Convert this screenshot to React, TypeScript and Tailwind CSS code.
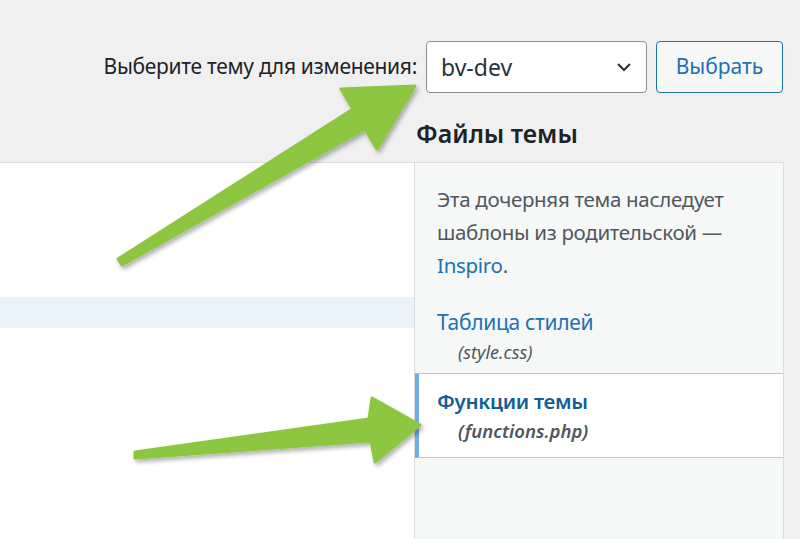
export default function App() {
  return (
    <div className="relative w-[800px] h-[539px] overflow-hidden bg-[#f0f0f1] text-[#3c434a]" style={{ fontFamily: '"Noto Sans", "Open Sans", sans-serif' }}>
      <div className="flex justify-end items-center gap-[9px] pt-[41px] pr-[17px]">
        <span className="text-[21px] tracking-[-0.3px] text-[#1d2327]">Выберите тему для изменения:</span>
        <div className="w-[221px] h-[52px] bg-white border border-[#8c8f94] rounded-[4px] flex items-center justify-between pl-[14px] pr-[12px]">
          <span className="text-[23px] text-[#2c3338]">bv-dev</span>
          <svg width="20" height="20" viewBox="0 0 20 20"><path d="M4 7l6 6 6-6" fill="none" stroke="#2c3338" strokeWidth="2.2" /></svg>
        </div>
        <div className="w-[127px] h-[52px] border border-[#2271b1] rounded-[4px] bg-[#f6f7f7] flex items-center justify-center text-[21px] text-[#2271b1]">Выбрать</div>
      </div>
      <div className="pl-[416px] mt-[22px] h-[47px] text-[25px] font-semibold text-[#1d2327]">Файлы темы</div>
      <div className="flex h-[400px]">
        <div className="w-[414px] bg-white border-t border-[#dcdcde] pt-[134px]">
          <div className="h-[31px] bg-[#eaf2fa]" />
        </div>
        <div className="w-[370px] bg-[#f6f7f7] border border-[#dcdcde] border-b-0">
          <div className="pl-[22px] pr-[8px] pt-[20px] text-[20.5px] tracking-[-0.3px] leading-[33px] text-[#50575e]">
            Эта дочерняя тема наследует шаблоны из родительской — <span className="text-[#2271b1]">Inspiro</span>.
          </div>
          <div className="mt-[25px] pl-[22px] text-[21px] tracking-[-0.3px] text-[#2271b1] leading-[30px]">Таблица стилей</div>
          <div className="pl-[43px] text-[18px] italic text-[#50575e] leading-[30px]">(style.css)</div>
          <div className="mt-[6px] h-[85px] bg-white border-y border-[#c3c4c7] border-l-[4px] border-l-[#72aee6] pl-[18px] pt-[12px]">
            <div className="text-[20.5px] font-semibold tracking-[-0.3px] text-[#135e96] leading-[30px]">Функции темы</div>
            <div className="pl-[21px] text-[18.5px] italic font-semibold text-[#50575e] leading-[30px]">(functions.php)</div>
          </div>
        </div>
      </div>
      <svg className="absolute inset-0" width="800" height="539">
        <defs>
          <filter id="s" x="-10%" y="-10%" width="120%" height="120%"><feDropShadow dx="2" dy="3" stdDeviation="2" floodColor="#000" floodOpacity="0.3" /></filter>
        </defs>
        <polygon filter="url(#s)" fill="#8dc63f" points="118,259 353,109 341,89 415,86 377,149 365,129 122,265" strokeLinejoin="round" stroke="#8dc63f" strokeWidth="3" />
        <polygon filter="url(#s)" fill="#8dc63f" points="135,452 369,419 372,398 420,425 375,462 371,441 135,458" strokeLinejoin="round" stroke="#8dc63f" strokeWidth="3" />
      </svg>
    </div>
  );
}
